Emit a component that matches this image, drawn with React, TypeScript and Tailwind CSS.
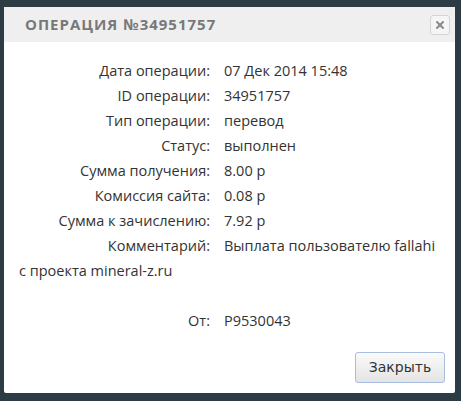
import {X} from "lucide-react";

type Row = {
  label: string;
  value: string;
};

const rows: Row[] = [
  {label: "Дата операции:", value: "07 Дек 2014 15:48"},
  {label: "ID операции:", value: "34951757"},
  {label: "Тип операции:", value: "перевод"},
  {label: "Статус:", value: "выполнен"},
  {label: "Сумма получения:", value: "8.00 р"},
  {label: "Комиссия сайта:", value: "0.08 р"},
  {label: "Сумма к зачислению:", value: "7.92 р"},
];

export default function App() {
  return (
    <div className="w-[461px] h-[401px] bg-[#2d3c44] pt-[7px] pl-[4px] font-['Open_Sans',sans-serif]">
      <div className="w-[451px] h-[386px] bg-white flex flex-col rounded-[2px]">
        <div className="h-[35px] bg-[#efefef] flex items-center justify-between pl-[21px] pr-[5px]">
          <h2 className="text-[15px] font-bold tracking-[1px] text-[#787878] uppercase">
            Операция №34951757
          </h2>
          <button className="w-[20px] h-[20px] rounded-[3px] border border-[#d4d4d4] bg-[#f5f5f5] flex items-center justify-center">
            <X size={12} strokeWidth={4} className="text-[#8a8a8a]" />
          </button>
        </div>
        <div className="flex-1 pl-[15px] pr-[10px] pt-[16px] text-[14.5px] leading-[25px] text-[#333]">
          {rows.map((row) => (
            <div key={row.label}>
              <span className="inline-block w-[191px] text-right mr-[14px]">{row.label}</span>
              {row.value}
            </div>
          ))}
          <div>
            <span className="inline-block w-[191px] text-right mr-[14px]">Комментарий:</span>
            Выплата пользователю fallahi
            <br />
            с проекта mineral-z.ru
          </div>
          <div className="mt-[25px]">
            <span className="inline-block w-[191px] text-right mr-[14px]">От:</span>
            P9530043
          </div>
        </div>
        <div className="flex justify-end pr-[10px] pb-[10px]">
          <button className="w-[90px] h-[31px] rounded-[3px] border border-[#a8bde0] bg-gradient-to-b from-[#fafafa] to-[#e4e4e4] text-[14px] text-[#333] font-['DejaVu_Sans',sans-serif]">
            Закрыть
          </button>
        </div>
      </div>
    </div>
  );
}
